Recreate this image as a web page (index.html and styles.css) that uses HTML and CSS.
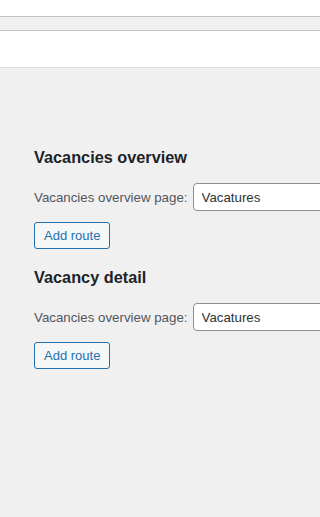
FILE: index.html
```html
<!DOCTYPE html>
<html lang="en">
<head>
    <meta charset="UTF-8">
    <meta name="viewport" content="width=device-width, initial-scale=1.0">
    <title>Vacancy routes</title>
    <link rel="stylesheet" href="styles.css">
</head>
<body>
    <div class="topbar"></div>
    <div class="tabs"></div>
    <div class="header"></div>

    <div class="content">
        <section class="route-group">
            <h2>Vacancies overview</h2>
            <div class="field">
                <label for="overview-page">Vacancies overview page:</label>
                <input type="text" id="overview-page" value="Vacatures">
            </div>
            <button class="button">Add route</button>
        </section>

        <section class="route-group">
            <h2>Vacancy detail</h2>
            <div class="field">
                <label for="detail-page">Vacancies overview page:</label>
                <input type="text" id="detail-page" value="Vacatures">
            </div>
            <button class="button">Add route</button>
        </section>
    </div>
</body>
</html>
```

FILE: styles.css
```css
body {
    margin: 0;
    background: #f0f0f1;
    font-family: "Liberation Sans", Arial, sans-serif;
    font-size: 13px;
    color: #3c434a;
    overflow: hidden;
}

.topbar {
    height: 16px;
    background: #ffffff;
    border-bottom: 1px solid #c3c4c7;
}

.tabs {
    height: 13px;
    background: #f0f0f1;
    border-bottom: 1px solid #c3c4c7;
}

.header {
    height: 36px;
    background: #ffffff;
    border-bottom: 1px solid #dcdcde;
}

.content {
    padding: 77px 0 0 34px;
    overflow: hidden;
}

.route-group {
    margin-bottom: 16px;
}

h2 {
    margin: 0 0 14px;
    font-size: 16.3px;
    font-weight: 700;
    color: #1d2327;
    line-height: 24px;
}

.field {
    display: flex;
    align-items: center;
    gap: 5px;
    margin-bottom: 11px;
}

label {
    white-space: nowrap;
    color: #50575e;
    font-size: 13.3px;
}

input {
    box-sizing: border-box;
    width: 140px;
    height: 28px;
    padding: 0 8px;
    border: 1px solid #8c8f94;
    border-radius: 4px;
    background: #ffffff;
    font-family: inherit;
    font-size: 13.3px;
    color: #2c3338;
    flex-shrink: 0;
}

.button {
    box-sizing: border-box;
    height: 27px;
    padding: 0 9px;
    border: 1px solid #2271b1;
    border-radius: 3px;
    background: #f6f7f7;
    color: #2271b1;
    font-family: inherit;
    font-size: 13px;
    cursor: pointer;
}
```
